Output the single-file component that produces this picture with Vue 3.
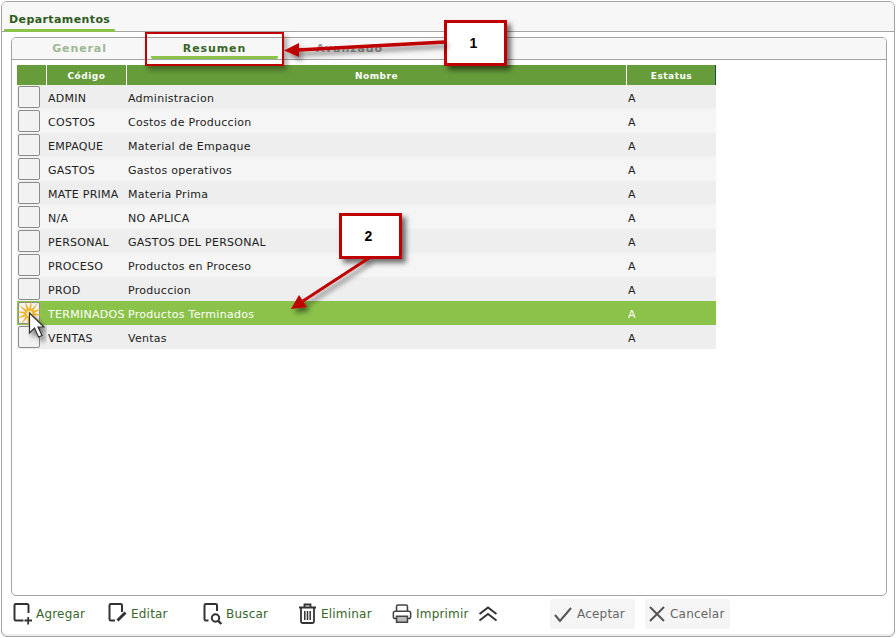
<script setup>
const rows = [
  ['ADMIN', 'Administracion'],
  ['COSTOS', 'Costos de Produccion'],
  ['EMPAQUE', 'Material de Empaque'],
  ['GASTOS', 'Gastos operativos'],
  ['MATE PRIMA', 'Materia Prima'],
  ['N/A', 'NO APLICA'],
  ['PERSONAL', 'GASTOS DEL PERSONAL'],
  ['PROCESO', 'Productos en Proceso'],
  ['PROD', 'Produccion'],
  ['TERMINADOS', 'Productos Terminados'],
  ['VENTAS', 'Ventas'],
]
const burst = Array.from({ length: 24 }, (_, i) => {
  const a = (i * Math.PI) / 12 + 0.15
  const r = i % 2 ? 4.5 : 14
  return (29.5 + Math.cos(a) * r).toFixed(1) + ',' + (313.5 + Math.sin(a) * r).toFixed(1)
}).join(' ')
</script>

<template>
  <div class="frame">
    <header class="head">
      <div class="head-tab">Departamentos</div>
    </header>
    <main class="panel">
      <nav class="tabs">
        <span class="tab general">General</span>
        <span class="tab resumen">Resumen</span>
        <span class="tab avanzado">Avanzado</span>
      </nav>
      <div class="grid">
        <div class="row hdr">
          <span class="c0"></span>
          <span class="c1">Código</span>
          <span class="c2">Nombre</span>
          <span class="c3">Estatus</span>
        </div>
        <div v-for="(r, i) in rows" :key="r[0]" class="row body" :class="{ odd: i % 2 === 0, sel: i === 9 }">
          <span class="c0"><i class="box"></i></span>
          <span class="c1">{{ r[0] }}</span>
          <span class="c2">{{ r[1] }}</span>
          <span class="c3">A</span>
        </div>
      </div>
    </main>
    <footer class="foot">
      <div class="actions">
        <button class="act a1">
          <svg width="20" height="22" viewBox="0 0 20 22" fill="none" stroke="#333" stroke-width="2"><path d="M10.500 17.500H2.800A1.300 1.300 0 0 1 1.500 16.200V2.300A1.300 1.300 0 0 1 2.800 1h11.400a1.300 1.300 0 0 1 1.300 1.300V10"/><path d="M11.500 17.500h7.500M15.200 14v7.500" stroke-width="1.800"/></svg>
          Agregar
        </button>
        <button class="act a2">
          <svg width="20" height="22" viewBox="0 0 20 22" fill="none" stroke="#333" stroke-width="2"><path d="M7 17.500H2.800A1.300 1.300 0 0 1 1.500 16.200V2.300A1.300 1.300 0 0 1 2.800 1h9.900a1.300 1.300 0 0 1 1.300 1.300V9"/><path d="M9.500 17.500l8-8" stroke-width="3"/></svg>
          Editar
        </button>
        <button class="act a3">
          <svg width="20" height="22" viewBox="0 0 20 22" fill="none" stroke="#333" stroke-width="2"><path d="M5.500 17.500H2.800A1.300 1.300 0 0 1 1.500 16.200V2.300A1.300 1.300 0 0 1 2.800 1h9.900a1.300 1.300 0 0 1 1.300 1.300V8"/><circle cx="12.500" cy="15" r="3.700"/><path d="M15 17.700l3.300 3.300" stroke-width="2.400"/></svg>
          Buscar
        </button>
        <button class="act a4">
          <svg width="20" height="22" viewBox="0 0 20 22" fill="none" stroke="#333" stroke-width="1.800"><path d="M1 4.500h17M6.500 4.500V1.500h6v3"/><path d="M3 4.500v14a1.500 1.500 0 0 0 1.500 1.500h10a1.500 1.500 0 0 0 1.500-1.500v-14"/><path d="M6.800 8v9M9.500 8v9M12.200 8v9" stroke-width="1.500"/></svg>
          Eliminar
        </button>
        <button class="act a5">
          <svg width="20" height="22" viewBox="0 0 22 22" fill="none" stroke="#444" stroke-width="1.700"><path d="M5 8V2.500A1.500 1.500 0 0 1 6.500 1h9A1.500 1.500 0 0 1 17 2.500V8"/><path d="M5 16H3.500A2 2 0 0 1 1.500 14V10A2 2 0 0 1 3.500 8h15a2 2 0 0 1 2 2v4a2 2 0 0 1-2 2H17"/><path d="M5 13.500h12V20H5z" fill="#bbb"/></svg>
          Imprimir
        </button>
        <svg class="chev" width="20" height="16" viewBox="0 0 20 16" fill="none" stroke="#333" stroke-width="2"><path d="M1.500 8 10 1.500 18.500 8M1.500 14.500 10 8l8.500 6.500"/></svg>
      </div>
      <div class="confirm">
        <button class="dis">
          <svg width="20" height="18" viewBox="0 0 20 18" fill="none" stroke="#555" stroke-width="2"><path d="M2 10l5 6L18 3"/></svg>
          Aceptar
        </button>
        <button class="dis">
          <svg width="18" height="18" viewBox="0 0 18 18" fill="none" stroke="#555" stroke-width="2"><path d="M2 2l14 14M16 2L2 16"/></svg>
          Cancelar
        </button>
      </div>
    </footer>

    <div class="mark red-box"></div>
    <div class="mark note n1">1</div>
    <div class="mark note n2">2</div>
    <svg class="mark overlay" width="896" height="638" viewBox="0 0 896 638">
      <defs>
        <filter id="sh" x="-20%" y="-50%" width="140%" height="200%"><feDropShadow dx="3" dy="4" stdDeviation="2.500" flood-color="#000" flood-opacity=".5"/></filter>
      </defs>
      <g filter="url(#sh)">
        <path d="M445 42 298 50" stroke="#c00000" stroke-width="3.500"/>
        <path d="M284 50.500l15-7.500 0 14z" fill="#c00000"/>
      </g>
      <g filter="url(#sh)">
        <path d="M369 258 303 301" stroke="#c00000" stroke-width="3"/>
        <path d="M291 309l8-14 8 12z" fill="#c00000"/>
      </g>
      <polygon :points="burst" fill="#f0b429" />
      <circle cx="29.500" cy="313.500" r="3" fill="#f9e7b0" />
      <path d="M29.500 313V333L34.500 328 38.500 337 42 335.500 38 327H44Z" fill="#fff" stroke="#333" stroke-width="1.200" filter="url(#sh)"/>
    </svg>
  </div>
</template>

<style>
html, body { margin: 0; background: #fff; }
</style>

<style scoped>
.frame {
  position: relative;
  box-sizing: border-box;
  width: 894px;
  height: 636px;
  margin: 1px 0 0 1px;
  border: 1px solid #a3a3a3;
  border-radius: 6px;
  background: #fff;
  font-family: "DejaVu Sans", Verdana, sans-serif;
  font-size: 11px;
  color: #222;
  display: flex;
  flex-direction: column;
  overflow: hidden;
  box-shadow: inset 0 -2px 0 #eee;
}
.head {
  height: 30px;
  box-sizing: border-box;
  background: #f7f7f7;
  border-bottom: 1px solid #a3a3a3;
  padding-left: 2px;
  display: flex;
  align-items: flex-end;
  flex: none;
}
.head-tab {
  width: 111px;
  height: 24px;
  box-sizing: border-box;
  padding: 5px 0 0 5px;
  border-bottom: 3px solid #8bc34a;
  border-radius: 0 0 2px 2px;
  font-weight: bold;
  font-size: 11px;
  letter-spacing: 0.4px;
  color: #2f5b22;
  margin-bottom: -1px;
}
.panel {
  box-sizing: border-box;
  width: 876px;
  height: 559px;
  margin: 5px 0 0 9px;
  border: 1px solid #a3a3a3;
  border-radius: 5px;
  flex: none;
  overflow: hidden;
}
.tabs {
  height: 21px;
  background: #f7f7f7;
  border-bottom: 1px solid #a3a3a3;
  display: flex;
  gap: 8px;
  padding-left: 4px;
}
.tab {
  display: block;
  box-sizing: border-box;
  width: 127px;
  height: 21px;
  text-align: center;
  font-weight: bold;
  line-height: 22px;
  letter-spacing: 0.9px;
  font-size: 11px;
}
.general { color: #9db693; }
.resumen { color: #37662a; border-bottom: 3px solid #8bc34a; border-radius: 2px; }
.avanzado { color: #999; }
.grid {
  margin: 5px 0 0 5px;
  width: 699px;
}
.row { display: grid; grid-template-columns: 29px 1px 79px 1px 499px 1px 89px 1px; }
.row > .c0 { grid-column: 1; }
.row > .c1 { grid-column: 3; }
.row > .c2 { grid-column: 5; }
.row > .c3 { grid-column: 7; }
.hdr {
  height: 20px;
  line-height: 22px;
  background: #669c39;
  color: #fff;
  font-weight: bold;
  font-size: 9px;
  letter-spacing: 0.5px;
  text-align: center;
  box-shadow: inset -1px 0 0 #1c4a57;
}
.hdr .c1, .hdr .c2 { box-shadow: 1px 0 0 #fff; }
.hdr .c0 { box-shadow: 1px 0 0 #fff; }
.body {
  height: 24px;
  line-height: 28px;
  background: #f5f5f5;
  color: #222;
  letter-spacing: 0.28px;
}
.body.odd { background: #eee; }
.body.sel { background: #8bc34a; color: #fff; }
.body .c1, .body .c2, .body .c3 { padding-left: 1px; white-space: nowrap; }
.c0 { position: relative; }
.box {
  display: block;
  box-sizing: border-box;
  width: 22px;
  height: 22px;
  margin: 1px 0 0 1px;
  border: 1px solid #8c8c8c;
  border-radius: 2px;
  background: #f2f2f2;
}
.foot {
  flex: 1;
  position: relative;
  display: flex;
  align-items: center;
  padding: 0 0 5px 11px;
}
.actions { display: flex; align-items: center; }
button {
  font: inherit;
  border: 0;
  padding: 0;
  background: none;
  display: flex;
  align-items: center;
}
.act { color: #38652c; font-size: 12px; gap: 3px; letter-spacing: 0.2px; }
.a1 { width: 95px; }
.a2 { width: 95px; }
.a3 { width: 95px; }
.a4 { width: 94px; }
.a5 { width: 86px; gap: 4px; }
.confirm { display: flex; gap: 10px; margin-left: 52px; }
.dis {
  width: 85px;
  height: 30px;
  background: #f5f5f5;
  color: #666;
  font-size: 12px;
  letter-spacing: 0.2px;
  gap: 4px;
  padding-left: 3px;
  box-sizing: border-box;
  border-radius: 2px;
}
.mark { position: absolute; }
.red-box {
  left: 143px;
  top: 30px;
  width: 139px;
  height: 34px;
  box-sizing: border-box;
  border: 2px solid #c00000;
  box-shadow: 3px 4px 5px rgba(0,0,0,.35);
}
.note {
  box-sizing: border-box;
  width: 63px;
  height: 46px;
  background: #fff;
  border: 3px solid #c00000;
  box-shadow: 4px 4px 5px rgba(0,0,0,.55);
  font-family: "Liberation Sans", Arial, sans-serif;
  font-weight: bold;
  font-size: 14px;
  color: #000;
  text-align: center;
  line-height: 40px;
  padding-right: 4px;
}
.n1 { left: 442px; top: 18px; }
.n2 { left: 337px; top: 211px; }
.overlay { left: -2px; top: -2px; pointer-events: none; }
</style>
